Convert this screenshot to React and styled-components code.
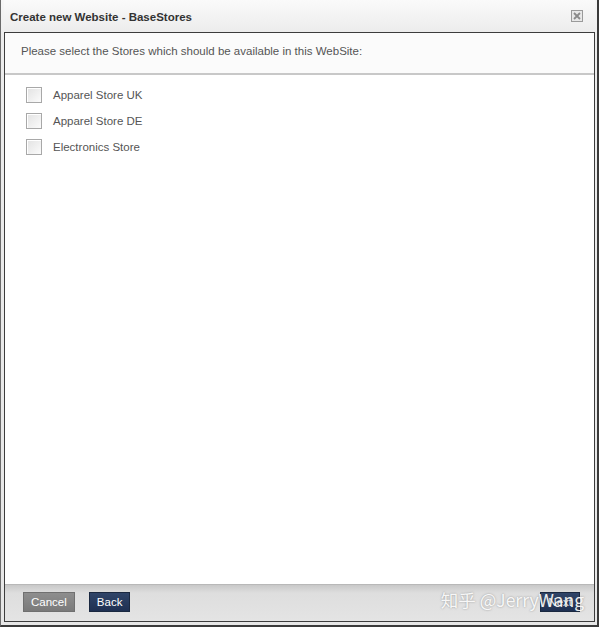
import React, { useState } from 'react'
import styled, { createGlobalStyle } from 'styled-components'

const GlobalStyle = createGlobalStyle`
  html, body {
    margin: 0;
    padding: 0;
    background: #ffffff;
  }
  body {
    font-family: "Liberation Sans", Arial, sans-serif;
    font-size: 11.5px;
  }
`

const stores = ['Apparel Store UK', 'Apparel Store DE', 'Electronics Store']

const App = () => {
  const [checked, setChecked] = useState({})

  const toggle = (name) => setChecked((prev) => ({ ...prev, [name]: !prev[name] }))

  return (
    <>
      <GlobalStyle />
      <Window>
        <TitleBar>
          <Title>Create new Website - BaseStores</Title>
          <CloseButton aria-label='close'>
            <svg width='12' height='12' viewBox='0 0 12 12'>
              <rect x='0.5' y='0.5' width='11' height='11' fill='#e8e8e8' stroke='#9a9a9a' />
              <path d='M3 3 L9 9 M9 3 L3 9' stroke='#8a8a8a' strokeWidth='1.8' />
            </svg>
          </CloseButton>
        </TitleBar>
        <Panel>
          <Intro>Please select the Stores which should be available in this WebSite:</Intro>
          <Content>
            {stores.map((name) => (
              <Row key={name} onClick={() => toggle(name)}>
                <Box $checked={checked[name]} />
                <Label>{name}</Label>
              </Row>
            ))}
          </Content>
          <Footer>
            <Button $variant='gray'>Cancel</Button>
            <Button $variant='navy'>Back</Button>
            <Spacer />
            <Button $variant='navy'>Next</Button>
            <Watermark>知乎 @JerryWang</Watermark>
          </Footer>
        </Panel>
      </Window>
    </>
  )
}

export default App

const Window = styled.div`
  box-sizing: border-box;
  width: 599px;
  height: 627px;
  display: flex;
  flex-direction: column;
  padding: 0 2px 3px 3px;
  background: linear-gradient(#f6f6f6, #ececec 40px, #e6e6e6);
  border-left: 1px solid #6a6a6a;
  border-right: 2px solid #3a3a3a;
  border-bottom: 2px solid #3a3a3a;
`

const TitleBar = styled.div`
  height: 32px;
  display: flex;
  align-items: center;
  justify-content: space-between;
  padding: 2px 12px 0 6px;
  box-sizing: border-box;
  background: linear-gradient(#fafafa, #ececec);
`

const Title = styled.div`
  font-weight: bold;
  font-size: 11.5px;
  color: #333333;
`

const CloseButton = styled.div`
  display: flex;
  width: 12px;
  height: 12px;
  margin-top: -2px;
  cursor: pointer;
`

const Panel = styled.div`
  position: relative;
  flex: 1;
  display: flex;
  flex-direction: column;
  border: 1px solid #3c3c3c;
  background: #ffffff;
  min-height: 0;
`

const Intro = styled.div`
  height: 42px;
  box-sizing: border-box;
  padding: 12px 16px 0;
  color: #555555;
  font-size: 11.5px;
  background: #fbfbfb;
  border-bottom: 2px solid #c8c8c8;
`

const Content = styled.div`
  flex: 1;
  display: flex;
  flex-direction: column;
  gap: 10px;
  padding: 12px 21px;
  background: #ffffff;
`

const Row = styled.div`
  display: flex;
  align-items: center;
  gap: 11px;
  height: 16px;
  cursor: pointer;
`

const Box = styled.span`
  box-sizing: border-box;
  width: 16px;
  height: 16px;
  border: 1px solid #a8a8a8;
  background: ${({ $checked }) =>
    $checked ? 'linear-gradient(135deg, #6a8ab8, #3d5a88)' : 'linear-gradient(135deg, #e2e2e2, #fbfbfb)'};
  box-shadow: inset 1px 1px 0 #ffffff;
`

const Label = styled.span`
  color: #555555;
  font-size: 11.5px;
`

const Footer = styled.div`
  height: 37px;
  display: flex;
  align-items: center;
  gap: 14px;
  padding: 0 14px 2px 18px;
  box-sizing: border-box;
  background: linear-gradient(#c8c8c8, #dedede 8px, #e4e4e4);
  border-top: 1px solid #b8b8b8;
`

const Spacer = styled.div`
  flex: 1;
`

const Button = styled.div`
  height: 20px;
  box-sizing: border-box;
  padding: 0 7px;
  display: flex;
  align-items: center;
  color: #ffffff;
  font-size: 11.5px;
  cursor: pointer;
  background: ${({ $variant }) =>
    $variant === 'navy' ? 'linear-gradient(#2f4468, #1f3052)' : 'linear-gradient(#8e8e8e, #7a7a7a)'};
  border: 1px solid ${({ $variant }) => ($variant === 'navy' ? '#1a2840' : '#707070')};
`

const Watermark = styled.div`
  position: absolute;
  right: 10px;
  bottom: 9px;
  font-family: "Noto Sans CJK SC", "Liberation Sans", sans-serif;
  font-size: 17.5px;
  color: rgba(255, 255, 255, 0.92);
  text-shadow: 0 0 2px rgba(90, 90, 90, 0.6);
  pointer-events: none;
  white-space: nowrap;
`
